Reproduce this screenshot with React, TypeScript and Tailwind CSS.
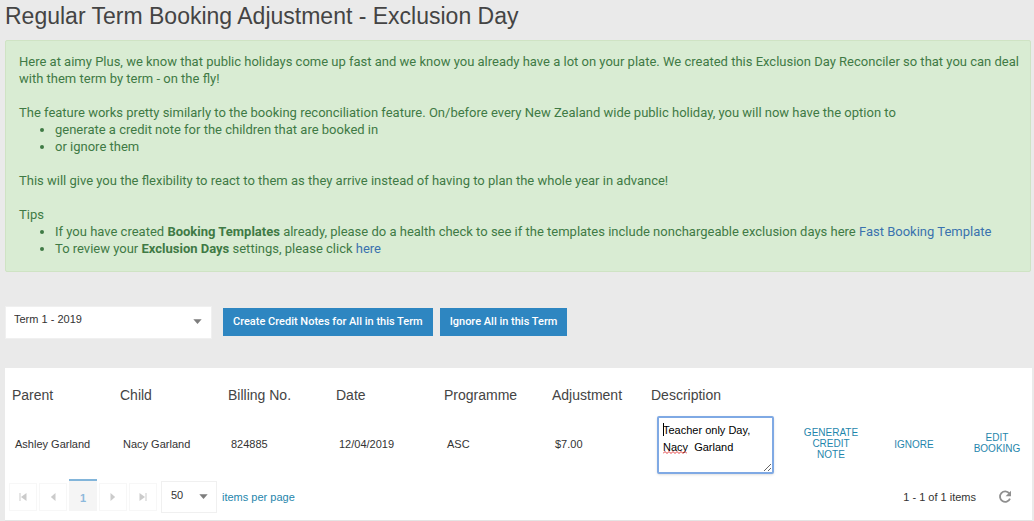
import { useState } from "react";

const bookings = [
  {
    parent: "Ashley Garland",
    child: "Nacy Garland",
    billingNo: "824885",
    date: "12/04/2019",
    programme: "ASC",
    adjustment: "$7.00",
    description: "Teacher only Day,\nNacy  Garland",
  },
];

const pagerButton =
  "flex h-7 w-7 items-center justify-center border border-[#f7f7f7] text-[#cbcbcb]";

function Caret({ className }: { className: string }) {
  return (
    <svg
      viewBox="0 0 10 6"
      className={`pointer-events-none absolute h-[5px] w-[9px] ${className}`}
      fill="#7d7d7d"
      aria-hidden="true"
    >
      <path d="M0 0.3h10L5 6z" />
    </svg>
  );
}

function PagerIcon({ bar, flip }: { bar?: boolean; flip?: boolean }) {
  return (
    <svg
      viewBox="0 0 10 10"
      className={flip ? "h-[10px] w-[10px] rotate-180" : "h-[10px] w-[10px]"}
      fill="currentColor"
      aria-hidden="true"
    >
      {bar && <path d="M1.5 1h1v8h-1z" />}
      <path d={bar ? "M8.5 1v8L3 5z" : "M7.5 1v8L2.8 5z"} />
    </svg>
  );
}

function Notice() {
  return (
    <section className="rounded-xs border border-[#cfe3c4] bg-[#d9ecd3] pt-3 pr-2 pb-[14px] pl-[13px] font-[Roboto,Arial,sans-serif] text-[13px] leading-[17px] text-[#3f7a45]">
      <p className="mb-[17px]">
        Here at aimy Plus, we know that public holidays come up fast and we know you already have a
        lot on your plate. We created this Exclusion Day Reconciler so that you can deal with them
        term by term - on the fly!
      </p>
      <p>
        The feature works pretty similarly to the booking reconciliation feature. On/before every
        New Zealand wide public holiday, you will now have the option to
      </p>
      <ul className="mb-[17px] list-disc pl-9">
        <li>generate a credit note for the children that are booked in</li>
        <li>or ignore them</li>
      </ul>
      <p className="mb-[17px]">
        This will give you the flexibility to react to them as they arrive instead of having to plan
        the whole year in advance!
      </p>
      <p>Tips</p>
      <ul className="list-disc pl-9">
        <li>
          If you have created <b>Booking Templates</b> already, please do a health check to see if
          the templates include nonchargeable exclusion days here{" "}
          <a href="#templates" className="text-[#3a72ae]">
            Fast Booking Template
          </a>
        </li>
        <li>
          To review your <b>Exclusion Days</b> settings, please click{" "}
          <a href="#exclusion-days" className="text-[#3a72ae]">
            here
          </a>
        </li>
      </ul>
    </section>
  );
}

function Toolbar() {
  const action =
    "h-7 bg-[#2e86c1] px-[10px] font-[Roboto,Arial,sans-serif] text-[11px] font-medium text-white";
  return (
    <div className="mt-[34px] flex items-start">
      <div className="relative w-[207px]">
        <select
          aria-label="Term"
          className="block h-[33px] w-full appearance-none border border-[#f0f0f0] bg-white pr-6 pb-[7px] pl-2 text-[11px] text-[#333]"
        >
          <option>Term 1 - 2019</option>
        </select>
        <Caret className="top-[13px] right-[10px]" />
      </div>
      <div className="mt-[2px] ml-[11px] flex gap-[7px]">
        <button type="button" className={action}>
          Create Credit Notes for All in this Term
        </button>
        <button type="button" className={action}>
          Ignore All in this Term
        </button>
      </div>
    </div>
  );
}

function DescriptionBox({ initial }: { initial: string }) {
  const [value, setValue] = useState(initial);
  return (
    <div className="relative w-[117px]">
      <textarea
        aria-label="Description"
        value={value}
        spellCheck={false}
        onChange={(e) => setValue(e.target.value)}
        className="block h-[58px] w-full resize rounded-xs border-2 border-[#7fa9e4] bg-white px-1 py-1 text-[11px] leading-[17px] text-black caret-transparent shadow-sm outline-none"
      />
      <span className="absolute top-[7px] left-[6px] h-[13px] w-px bg-black" />
      <svg
        viewBox="0 0 24 3"
        className="pointer-events-none absolute top-[35px] left-[6px] h-[3px] w-6"
        fill="none"
        stroke="#e03c3c"
        aria-hidden="true"
      >
        <path d="M0 2.5l2-2 2 2 2-2 2 2 2-2 2 2 2-2 2 2 2-2 2 2 2-2 2 2" />
      </svg>
    </div>
  );
}

function RowAction({ children }: { children: string }) {
  return (
    <td className="pl-[13px] text-center align-middle">
      <button type="button" className="w-16 text-[10px] leading-[11px] text-[#1f86ac] uppercase">
        {children}
      </button>
    </td>
  );
}

function Pager() {
  return (
    <div className="mt-[3px] flex items-start pr-5 pl-1 text-[11px]">
      <nav aria-label="Pages" className="mt-1 flex gap-[2px]">
        <button type="button" aria-label="First page" className={pagerButton}>
          <PagerIcon bar />
        </button>
        <button type="button" aria-label="Previous page" className={pagerButton}>
          <PagerIcon />
        </button>
        <button
          type="button"
          aria-current="page"
          className="-mt-1 h-8 w-7 border-t-2 border-[#82b5da] bg-[#f5f5f5] pt-1 text-[11px] font-bold text-[#8cb9dc]"
        >
          1
        </button>
        <button type="button" aria-label="Next page" className={pagerButton}>
          <PagerIcon flip />
        </button>
        <button type="button" aria-label="Last page" className={pagerButton}>
          <PagerIcon bar flip />
        </button>
      </nav>
      <div className="mt-[2px] ml-1 flex items-center">
        <div className="relative w-14">
          <select
            id="page-size"
            className="block h-8 w-full appearance-none border border-[#f0f0f0] bg-white pb-1 pl-[9px] text-[11px] text-[#333]"
          >
            <option>50</option>
          </select>
          <Caret className="top-[13px] right-[9px]" />
        </div>
        <label htmlFor="page-size" className="ml-[5px] text-[#1f86ac]">
          items per page
        </label>
      </div>
      <div className="mt-[2px] ml-auto flex h-8 items-center gap-[22px] text-[#333]">
        <span>1 - 1 of 1 items</span>
        <button type="button" aria-label="Refresh">
          <svg viewBox="0 0 14 14" className="h-[14px] w-[14px]" fill="none" aria-hidden="true">
            <path d="M11.3 3.4A5.2 5.2 0 1 0 12 8.6" stroke="#8f8f8f" strokeWidth="1.8" />
            <path d="M13 0.8v5.4H7.6z" fill="#8f8f8f" />
          </svg>
        </button>
      </div>
    </div>
  );
}

export default function App() {
  return (
    <main className="min-h-screen bg-[#eaeaea] pr-[3px] pl-[5px] font-['Liberation_Sans',Arial,sans-serif] text-[#333]">
      <h1 className="pt-[2px] pb-[10px] text-[23px] leading-7 text-[#444]">
        Regular Term Booking Adjustment - Exclusion Day
      </h1>
      <Notice />
      <Toolbar />
      <section className="mt-[29px] mr-[-1px] border-b border-[#e4e4e4] bg-white pb-[7px]">
        <table className="w-full table-fixed border-collapse text-left">
          <colgroup>
            <col className="w-[108px]" />
            <col className="w-[108px]" />
            <col className="w-[108px]" />
            <col className="w-[108px]" />
            <col className="w-[108px]" />
            <col className="w-[99px]" />
            <col />
            <col className="w-[83px]" />
            <col className="w-[83px]" />
            <col className="w-[83px]" />
          </colgroup>
          <thead>
            <tr className="h-[45px] text-[14px] text-[#444] [&>th]:pt-[10px] [&>th]:pl-[7px] [&>th]:font-normal">
              <th scope="col">Parent</th>
              <th scope="col">Child</th>
              <th scope="col">Billing No.</th>
              <th scope="col">Date</th>
              <th scope="col">Programme</th>
              <th scope="col">Adjustment</th>
              <th scope="col">Description</th>
              <td />
              <td />
              <td />
            </tr>
          </thead>
          <tbody>
            {bookings.map((b) => (
              <tr key={b.billingNo} className="h-[63px] text-[11px]">
                <td className="pl-[10px]">{b.parent}</td>
                <td className="pl-[10px]">{b.child}</td>
                <td className="pl-[10px]">{b.billingNo}</td>
                <td className="pl-[10px]">{b.date}</td>
                <td className="pl-[10px]">{b.programme}</td>
                <td className="pl-[10px]">{b.adjustment}</td>
                <td className="pl-[13px]">
                  <DescriptionBox initial={b.description} />
                </td>
                <RowAction>Generate credit note</RowAction>
                <RowAction>Ignore</RowAction>
                <RowAction>Edit booking</RowAction>
              </tr>
            ))}
          </tbody>
        </table>
        <Pager />
      </section>
    </main>
  );
}
